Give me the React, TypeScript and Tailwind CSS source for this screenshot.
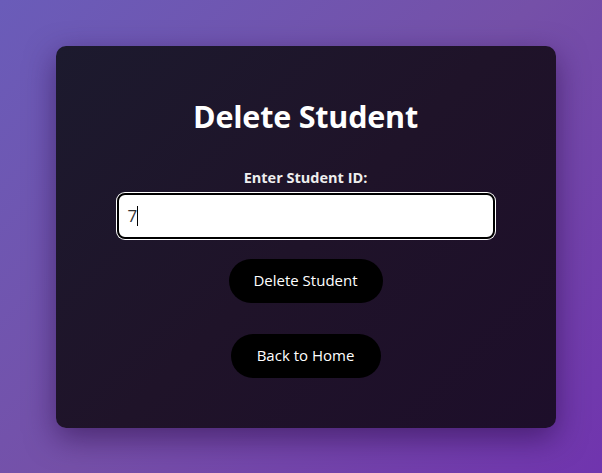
import React from 'react';

export default function App() {
  return (
    <div
      className="min-h-[473px] w-full flex items-center justify-center pl-[9px] bg-[linear-gradient(135deg,#6a5cb9_0%,#7550a8_50%,#7034ae_100%)]"
      style={{ fontFamily: '"Open Sans", "Noto Sans", sans-serif' }}
    >
      <div className="w-[500px] h-[382px] rounded-[10px] bg-[linear-gradient(135deg,#1c1a2e_0%,#1f1329_50%,#1d0e2a_100%)] shadow-[0_10px_30px_rgba(40,10,70,0.55)] flex flex-col items-center pt-[50px]">
        <h2 className="text-[30.5px] leading-[40px] font-bold text-white tracking-[-0.2px]">Delete Student</h2>

        <label className="mt-[32px] text-[14.5px] leading-[20px] font-bold text-[#eeeeee]">Enter Student ID:</label>

        <div className="mt-[5px] w-[378px] h-[46px] rounded-[8px] border-2 border-black bg-white ring-1 ring-white flex items-center px-[9px]">
          <span className="text-[17px] text-[#333333]">7</span>
          <span className="w-px h-[20px] bg-black"></span>
        </div>

        <button className="mt-[20px] w-[154px] h-[44px] rounded-full bg-black text-white text-[15px]">
          Delete Student
        </button>

        <button className="mt-[31px] w-[150px] h-[44px] rounded-full bg-black text-white text-[15px]">
          Back to Home
        </button>
      </div>
    </div>
  );
}
